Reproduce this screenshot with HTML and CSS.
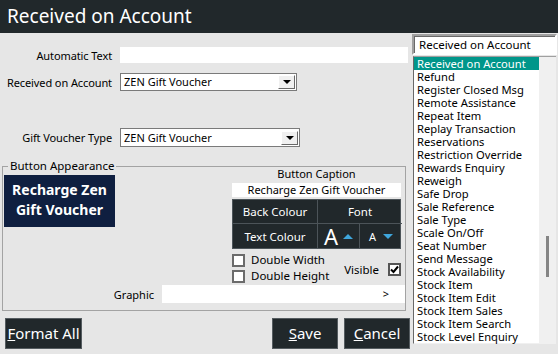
FILE: index.html
```html
<!DOCTYPE html>
<html lang="en">
<head>
    <meta charset="UTF-8">
    <title>Received on Account</title>
    <link rel="stylesheet" href="styles.css">
</head>
<body>
    <div class="titlebar">Received on Account</div>

    <div class="main">
        <div class="form">
            <div class="row row_auto">
                <span class="label">Automatic Text</span>
                <div class="textbox auto_text"></div>
            </div>
            <div class="row row_roa">
                <span class="label">Received on Account</span>
                <div class="combo combo_roa">
                    <span class="combo_text">ZEN Gift Voucher</span>
                    <span class="combo_btn"><span class="arrow"></span></span>
                </div>
            </div>
            <div class="row row_gv">
                <span class="label">Gift Voucher Type</span>
                <div class="combo combo_gv">
                    <span class="combo_text">ZEN Gift Voucher</span>
                    <span class="combo_btn"><span class="arrow"></span></span>
                </div>
            </div>

            <div class="appearance">
                <div class="legend">Button Appearance</div>
                <div class="appearance_top">
                    <div class="preview">Recharge Zen<br>Gift Voucher</div>
                    <div class="caption_panel">
                        <div class="caption_title">Button Caption</div>
                        <div class="caption_box">Recharge Zen Gift Voucher</div>
                        <div class="style_grid">
                            <div class="cell">Back Colour</div>
                            <div class="cell cell_font">Font</div>
                            <div class="cell">Text Colour</div>
                            <div class="cell"><span class="big_a">A</span><span class="tri tri_up"></span></div>
                            <div class="cell"><span class="small_a">A</span><span class="tri tri_down"></span></div>
                        </div>
                        <div class="options">
                            <div class="checks">
                                <div class="check"><span class="box"></span>Double Width</div>
                                <div class="check"><span class="box"></span>Double Height</div>
                            </div>
                            <div class="visible">
                                Visible
                                <span class="box checked">
                                    <svg width="9" height="9" viewBox="0 0 9 9"><path d="M1 4.5 L3.5 7 L8 1.5" fill="none" stroke="#000" stroke-width="2"/></svg>
                                </span>
                            </div>
                        </div>
                    </div>
                </div>
                <div class="graphic_row">
                    <span class="graphic_label">Graphic</span>
                    <div class="graphic_box">&gt;</div>
                </div>
            </div>

            <div class="actions">
                <button class="btn btn_format"><u>F</u>ormat All</button>
                <span class="spacer"></span>
                <button class="btn btn_save"><u>S</u>ave</button>
                <button class="btn btn_cancel"><u>C</u>ancel</button>
            </div>
        </div>

        <div class="side">
            <div class="side_combo">Received on Account</div>
            <div class="list">
                <ul class="items">
                    <li class="selected">Received on Account</li>
                    <li>Refund</li>
                    <li>Register Closed Msg</li>
                    <li>Remote Assistance</li>
                    <li>Repeat Item</li>
                    <li>Replay Transaction</li>
                    <li>Reservations</li>
                    <li>Restriction Override</li>
                    <li>Rewards Enquiry</li>
                    <li>Reweigh</li>
                    <li>Safe Drop</li>
                    <li>Sale Reference</li>
                    <li>Sale Type</li>
                    <li>Scale On/Off</li>
                    <li>Seat Number</li>
                    <li>Send Message</li>
                    <li>Stock Availability</li>
                    <li>Stock Item</li>
                    <li>Stock Item Edit</li>
                    <li>Stock Item Sales</li>
                    <li>Stock Item Search</li>
                    <li>Stock Level Enquiry</li>
                </ul>
                <div class="scrollbar"><div class="thumb"></div></div>
            </div>
        </div>
    </div>
</body>
</html>
```

FILE: styles.css
```css
* {
    margin: 0;
    padding: 0;
    box-sizing: border-box;
}

body {
    background-color: #e6e6e6;
    font-family: "Noto Sans", "Open Sans", sans-serif;
    font-size: 11px;
    color: #000;
    width: 558px;
    height: 354px;
    overflow: hidden;
}

.titlebar {
    height: 33px;
    background-color: #21282b;
    color: #fff;
    font-size: 19px;
    line-height: 33px;
    padding-left: 7px;
}

.main {
    display: flex;
    padding-top: 1px;
}

.form {
    width: 410px;
}

/* form rows */
.row {
    display: flex;
    align-items: center;
}

.label {
    width: 112px;
    text-align: right;
    margin-right: 8px;
    white-space: nowrap;
    letter-spacing: -0.1px;
}

.row_auto {
    margin-top: 13px;
}

.row_roa {
    margin-top: 10px;
}

.row_gv {
    margin-top: 37px;
}

.textbox {
    background-color: #fff;
    height: 16px;
}

.auto_text {
    width: 288px;
}

.combo {
    display: flex;
    align-items: center;
    background-color: #fff;
    border: 1px solid #7a7a7a;
    padding: 0 1px 0 3px;
}

.combo_roa {
    width: 177px;
    height: 18px;
}

.combo_gv {
    width: 180px;
    height: 19px;
}

.combo_text {
    flex: 1;
    line-height: 14px;
}

.combo_btn {
    width: 17px;
    height: 14px;
    background-color: #f0f0f0;
    border: 1px solid;
    border-color: #fff #696969 #696969 #fff;
    display: flex;
    align-items: center;
    justify-content: center;
}

.arrow {
    border-left: 4px solid transparent;
    border-right: 4px solid transparent;
    border-top: 4px solid #000;
}

/* button appearance group */
.appearance {
    border: 1px solid #a3a3a3;
    margin: 19px 4px 0 2px;
    padding-bottom: 7px;
}

.legend {
    width: fit-content;
    height: 14px;
    line-height: 14px;
    margin: -8px 0 0 5px;
    padding: 0 2px;
    background-color: #e6e6e6;
    font-size: 11.5px;
}

.appearance_top {
    display: flex;
    margin-top: -6px;
}

.preview {
    width: 111px;
    height: 52px;
    margin: 8px 0 0 1px;
    background-color: #0f1f40;
    color: #fff;
    font-weight: bold;
    font-size: 14px;
    line-height: 20px;
    text-align: center;
    padding-top: 5px;
}

.caption_panel {
    width: 169px;
    margin-left: auto;
    margin-right: 4px;
}

.caption_title {
    text-align: center;
    line-height: 14px;
}

.caption_box {
    margin-top: 2px;
    height: 14px;
    line-height: 14px;
    background-color: #fff;
    text-align: center;
}

.style_grid {
    margin-top: 2px;
    display: grid;
    grid-template-columns: 85px 42px 42px;
    grid-template-rows: 24px 24px;
    background-color: #21282b;
    border: 1px solid #4c5459;
    color: #fff;
}

.cell {
    display: flex;
    align-items: center;
    justify-content: center;
    border-right: 1px solid #4c5459;
    border-bottom: 1px solid #4c5459;
    font-size: 11.5px;
}

.cell_font {
    grid-column: span 2;
    border-right: none;
}

.style_grid .cell:nth-child(3),
.style_grid .cell:nth-child(4),
.style_grid .cell:nth-child(5) {
    border-bottom: none;
}

.style_grid .cell:nth-child(5) {
    border-right: none;
}

.big_a {
    font-size: 22px;
    line-height: 22px;
    margin-right: 5px;
}

.small_a {
    font-size: 11px;
    margin-right: 7px;
}

.tri {
    border-left: 5px solid transparent;
    border-right: 5px solid transparent;
}

.tri_up {
    border-bottom: 5px solid #3fa6dc;
}

.tri_down {
    border-top: 5px solid #3fa6dc;
}

.options {
    display: flex;
    align-items: center;
    justify-content: space-between;
    margin-top: 5px;
}

.checks {
    display: flex;
    flex-direction: column;
    gap: 4px;
}

.check {
    display: flex;
    align-items: center;
    height: 12px;
    line-height: 12px;
    font-size: 11.5px;
}

.box {
    width: 13px;
    height: 13px;
    border: 2px solid #6b6b6b;
    background-color: #fff;
    margin-right: 6px;
    display: inline-flex;
    align-items: center;
    justify-content: center;
}

.visible {
    display: flex;
    align-items: center;
    gap: 9px;
    margin-top: 2px;
    font-size: 11.5px;
}

.visible .box {
    margin-right: 0;
    border-color: #555;
}

.graphic_row {
    display: flex;
    align-items: center;
    margin-top: 3px;
}

.graphic_label {
    width: 151px;
    text-align: right;
    margin-right: 8px;
}

.graphic_box {
    width: 243px;
    height: 18px;
    background-color: #fff;
    text-align: right;
    padding-right: 16px;
    line-height: 18px;
}

/* bottom buttons */
.actions {
    display: flex;
    gap: 6px;
    margin-top: 7px;
    padding-left: 5px;
}

.spacer {
    flex: 1;
}

.btn {
    height: 31px;
    background-color: #21282b;
    border: 1px solid #555c60;
    color: #fff;
    font-family: "Noto Sans", "Open Sans", sans-serif;
    font-size: 15px;
    padding-bottom: 2px;
}

.btn_format {
    width: 77px;
}

.btn_save,
.btn_cancel {
    width: 66px;
}

/* right hand list */
.side {
    width: 145px;
    margin-left: 2px;
}

.side_combo {
    height: 21px;
    background-color: #fff;
    border: 2px solid;
    border-color: #a0a0a0 #fff #fff #a0a0a0;
    box-shadow: inset 1px 1px 0 #696969;
    line-height: 17px;
    padding-left: 5px;
    font-size: 11.5px;
}

.list {
    display: flex;
    height: 288px;
    margin: 1px 1px 0 1px;
    background-color: #fff;
    border-left: 1px solid #696969;
    border-top: 1px solid #a0a0a0;
    border-bottom: 1px solid #f0f0f0;
}

.items {
    list-style: none;
    flex: 1;
}

.items li {
    height: 13px;
    line-height: 13px;
    padding-left: 3px;
    white-space: nowrap;
    font-size: 11.2px;
}

.items li.selected {
    background-color: #00968a;
    color: #fff;
}

.scrollbar {
    width: 17px;
    background-color: #f0f0f0;
    padding: 179px 0 0 7px;
}

.thumb {
    width: 3px;
    height: 41px;
    background-color: #858585;
}
```
